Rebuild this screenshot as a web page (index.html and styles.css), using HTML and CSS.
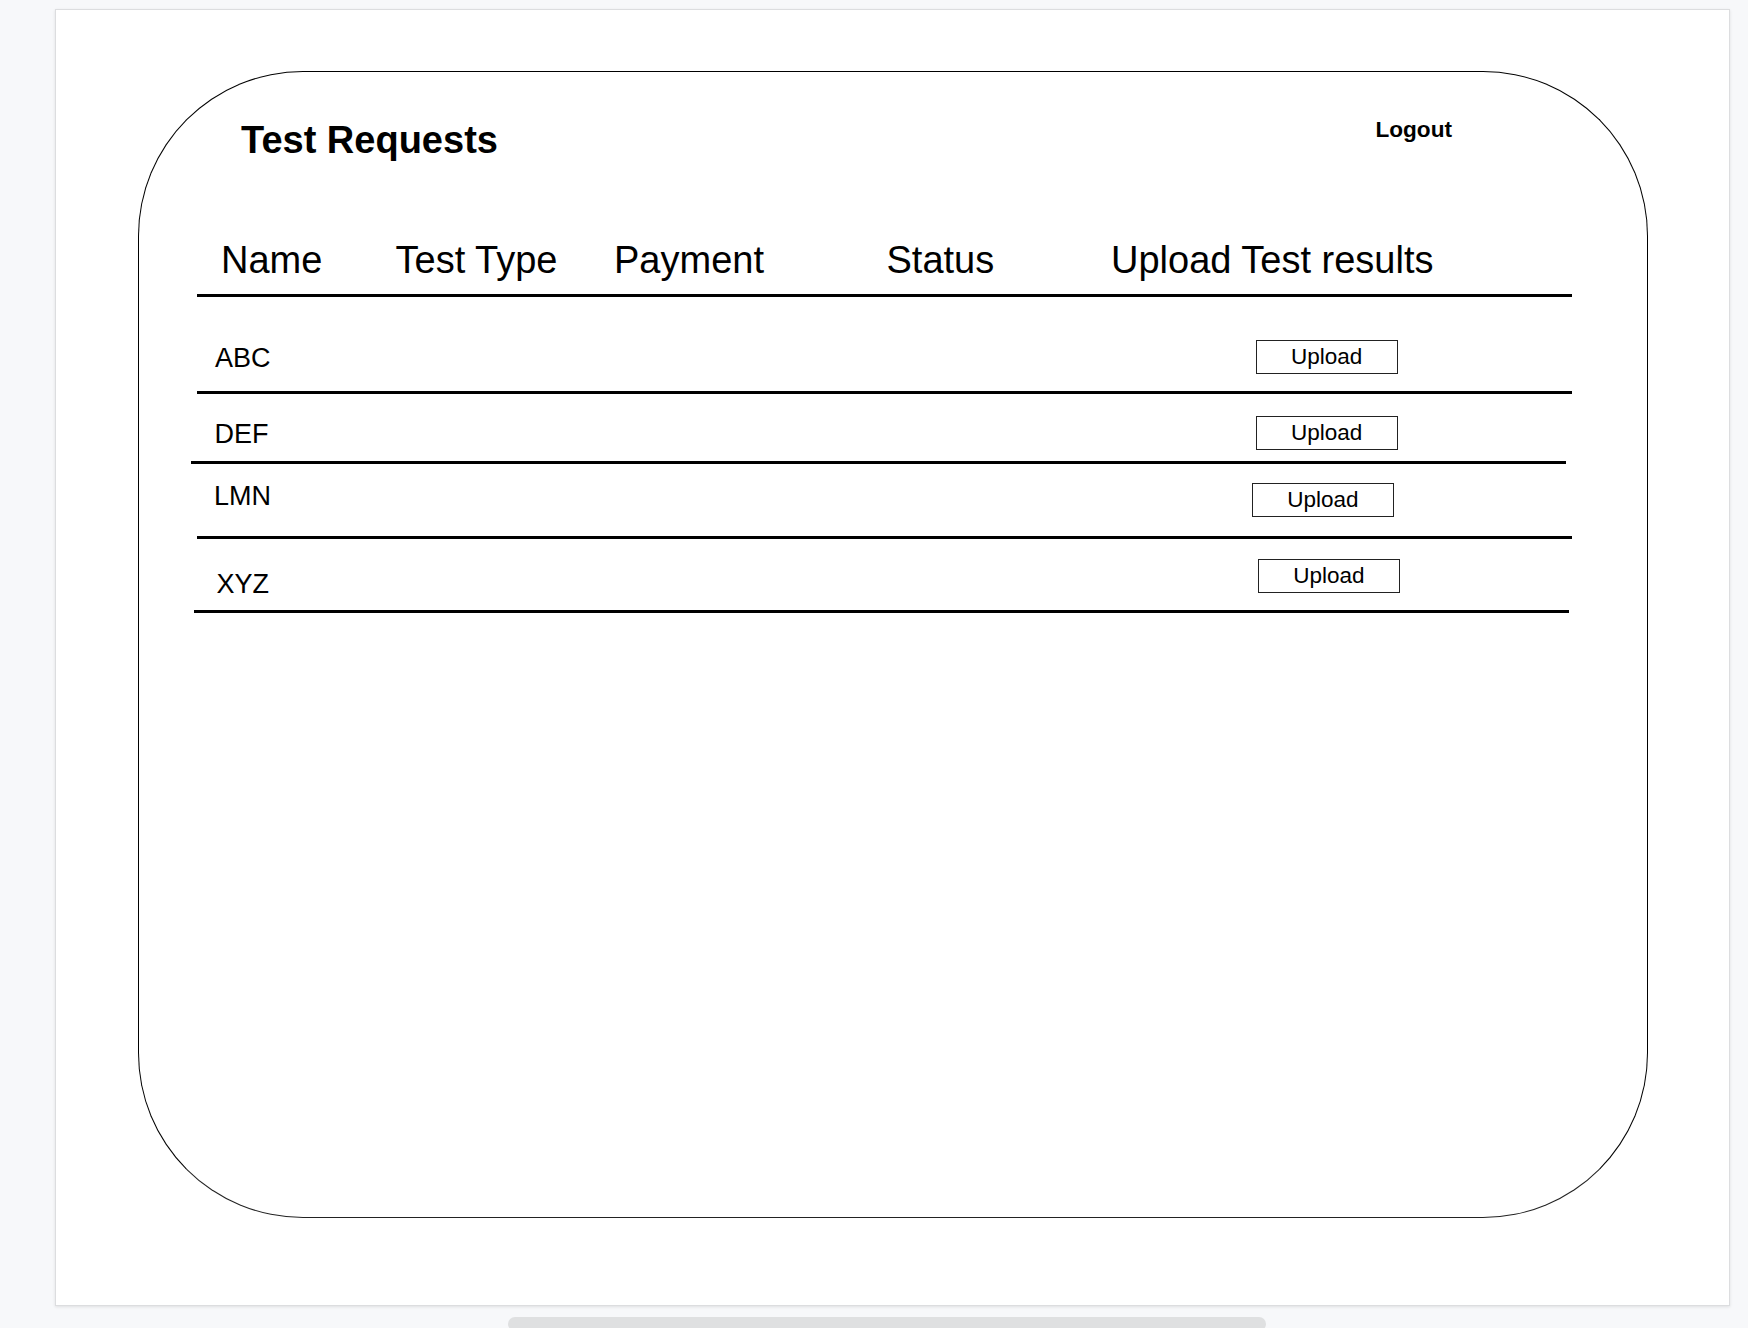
FILE: index.html
```html
<!DOCTYPE html>
<html lang="en">
<head>
<meta charset="utf-8">
<title>Test Requests</title>
<link rel="stylesheet" href="styles.css">
</head>
<body>
<div class="sheet">
  <div class="frame">
    <div class="topbar">
      <h1 class="title">Test Requests</h1>
      <a class="logout" href="#">Logout</a>
    </div>
    <div class="table">
      <div class="thead">
        <span>Name</span>
        <span>Test Type</span>
        <span>Payment</span>
        <span>Status</span>
        <span>Upload Test results</span>
      </div>
      <div class="row row-1">
        <span class="name">ABC</span>
        <button class="upload">Upload</button>
      </div>
      <div class="row row-2">
        <span class="name">DEF</span>
        <button class="upload">Upload</button>
      </div>
      <div class="row row-3">
        <span class="name">LMN</span>
        <button class="upload">Upload</button>
      </div>
      <div class="row row-4">
        <span class="name">XYZ</span>
        <button class="upload">Upload</button>
      </div>
    </div>
  </div>
</div>
<div class="hscroll"></div>
</body>
</html>
```

FILE: styles.css
```css
html, body {
  margin: 0;
  padding: 0;
}
body {
  background: #f7f8fa;
  height: 1328px;
  overflow: hidden;
  font-family: "Liberation Sans", Arial, Helvetica, sans-serif;
  color: #000;
}
.sheet {
  box-sizing: border-box;
  margin: 9px 0 0 55px;
  width: 1675px;
  height: 1297px;
  background: #fff;
  border: 1px solid #dcdddf;
  box-shadow: 0 1px 3px rgba(0, 0, 0, 0.10);
  padding-top: 61px;
  padding-left: 82px;
}
.frame {
  box-sizing: border-box;
  width: 1510px;
  height: 1147px;
  border: 1px solid #000;
  border-bottom-color: #222;
  border-radius: 165px;
  padding-top: 45px;
}
.topbar {
  display: flex;
  justify-content: space-between;
  align-items: flex-start;
  padding: 0 195px 0 102px;
}
.title {
  margin: 1px 0 0 0;
  font-size: 38px;
  line-height: 44px;
  font-weight: 700;
}
.logout {
  font-size: 22.6px;
  line-height: 26px;
  font-weight: 700;
  color: #000;
  text-decoration: none;
}
.table {
  margin: 76px 0 0 58px;
  width: 1375px;
}
.thead {
  display: grid;
  grid-template-columns: 174.5px 218.5px 272.5px 224.5px 1fr;
  padding: 0 0 11.5px 24px;
  border-bottom: 3px solid #000;
  font-size: 38px;
  line-height: 44px;
}
.row {
  box-sizing: border-box;
  width: 1375px;
  display: flex;
  align-items: flex-start;
  border-bottom: 3px solid #000;
}
.name {
  font-size: 27px;
  line-height: 30px;
}
.upload {
  box-sizing: border-box;
  width: 142px;
  height: 34px;
  margin: 0;
  padding: 0;
  background: #fff;
  border: 1.5px solid #222;
  border-radius: 0;
  font-family: "Liberation Sans", Arial, Helvetica, sans-serif;
  font-size: 22.5px;
  line-height: 30px;
  color: #000;
}
.row-1 {
  padding: 43.5px 0 17px 18px;
}
.row-1 .name {
  margin-top: 3px;
  width: 1040.7px;
}
.row-2 {
  margin-left: -6px;
  padding: 22px 0 11px 23.6px;
}
.row-2 .name {
  margin-top: 3px;
  width: 1041.1px;
}
.row-3 {
  padding: 18.7px 0 19px 16.9px;
}
.row-3 .name {
  margin-top: -2px;
  width: 1038.1px;
}
.row-4 {
  margin-left: -3px;
  padding: 20px 0 10.5px 22.6px;
}
.row-4 .name {
  margin-top: 10.7px;
  width: 1041.4px;
}
.hscroll {
  margin: 11px 0 0 508px;
  width: 758px;
  height: 14px;
  border-radius: 7px;
  background: #dfe0e1;
}
```
